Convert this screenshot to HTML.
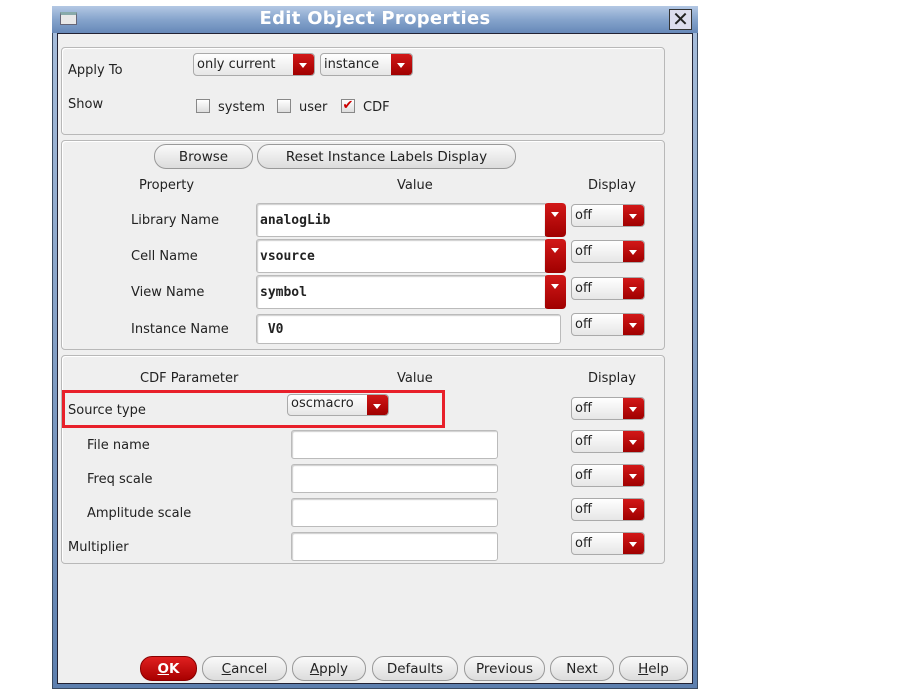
<!DOCTYPE html>
<html><head><style>
*{box-sizing:border-box;margin:0;padding:0}
body{width:900px;height:696px;background:#fff;position:relative;overflow:hidden;font-family:"DejaVu Sans","Liberation Sans",sans-serif;font-size:13px;color:#222}
.a{position:absolute}
.l{margin-top:2px}
.win{left:52px;top:6px;width:646px;height:683px;background:linear-gradient(#a9bfdc,#5d7fae);border:1px solid #3a4a60}
.body{left:57px;top:33px;width:636px;height:651px;background:#efefef;border:1px solid #223}
.title{left:52px;top:6px;width:646px;height:27px;background:linear-gradient(#b4c8e4,#86a4cc 50%,#6688b8);}
.tt{left:52px;top:8px;width:646px;text-align:center;color:#fff;font-weight:bold;font-size:18px;letter-spacing:0.3px}
.panel{border:1px solid #b8b8b8;border-radius:4px;box-shadow:inset 1px 1px 0 #fff}
.cb{height:23px;border:1px solid #aaa;border-radius:4px;background:linear-gradient(#fff,#e6e6e6);font-size:13px;padding:3px 0 0 3px;overflow:hidden}
.cb .ar{position:absolute;right:0;top:0;bottom:0;width:21px;background:linear-gradient(#d21818,#a00000);border-radius:0 3px 3px 0}
.ar:after{content:"";position:absolute;left:6px;top:9px;border-left:4px solid transparent;border-right:4px solid transparent;border-top:5px solid #fff}
.tf{background:#fff;border:1px solid #bbb;border-radius:3px;box-shadow:inset 1px 1px 1px #ccc;font-family:"DejaVu Sans Mono","Liberation Mono",monospace;font-weight:bold;font-size:13px;padding:9px 0 0 3px}
.btn{height:25px;border:1px solid #999;border-radius:12px;background:linear-gradient(#fafafa,#dcdcdc);text-align:center;font-size:13.5px;padding-top:4px}
.chk{width:14px;height:14px;border:1px solid #888;background:linear-gradient(#fff,#ddd)}
</style></head><body>
<div class="a win"></div>
<div class="a title"></div>
<div class="a" style="left:60px;top:12px;width:17px;height:13px;border:1px solid #667;background:#e8e8e8;border-top:3px solid #8aa"></div>
<div class="a tt">Edit Object Properties</div>
<div class="a" style="left:669px;top:9px;width:23px;height:21px;border:1px solid #333;background:#dde;font-size:20px;line-height:18px;text-align:center">✕</div>
<div class="a body"></div>

<div class="a panel" style="left:61px;top:47px;width:604px;height:88px"></div>
<div class="a l" style="left:68px;top:61px">Apply To</div>
<div class="a cb" style="left:193px;top:53px;width:122px">only current<div class="ar"></div></div>
<div class="a cb" style="left:320px;top:53px;width:93px">instance<div class="ar"></div></div>
<div class="a l" style="left:68px;top:95px">Show</div>
<div class="a chk" style="left:196px;top:99px"></div><div class="a l" style="left:218px;top:98px">system</div>
<div class="a chk" style="left:277px;top:99px"></div><div class="a l" style="left:299px;top:98px">user</div>
<div class="a chk" style="left:341px;top:99px;color:#c00;font-size:13px;line-height:12px;text-align:center;font-weight:bold">✔</div><div class="a l" style="left:363px;top:98px">CDF</div>

<div class="a panel" style="left:61px;top:140px;width:604px;height:210px"></div>
<div class="a btn" style="left:154px;top:144px;width:99px">Browse</div>
<div class="a btn" style="left:257px;top:144px;width:259px">Reset Instance Labels Display</div>
<div class="a l" style="left:139px;top:176px">Property</div>
<div class="a l" style="left:397px;top:176px">Value</div>
<div class="a l" style="left:588px;top:176px">Display</div>

<div class="a l" style="left:131px;top:211px">Library Name</div>
<div class="a tf" style="left:256px;top:203px;width:310px;height:34px">analogLib</div><div class="a cb" style="left:544px;top:203px;width:22px;height:34px;border:none;padding:0"><div class="ar"></div></div>
<div class="a l" style="left:131px;top:247px">Cell Name</div>
<div class="a tf" style="left:256px;top:239px;width:310px;height:34px">vsource</div><div class="a cb" style="left:544px;top:239px;width:22px;height:34px;border:none;padding:0"><div class="ar"></div></div>
<div class="a l" style="left:131px;top:283px">View Name</div>
<div class="a tf" style="left:256px;top:275px;width:310px;height:34px">symbol</div><div class="a cb" style="left:544px;top:275px;width:22px;height:34px;border:none;padding:0"><div class="ar"></div></div>
<div class="a l" style="left:131px;top:320px">Instance Name</div>
<div class="a tf" style="left:256px;top:314px;width:305px;height:30px;padding-top:7px">&nbsp;V0</div>
<div class="a cb" style="left:571px;top:204px;width:74px">off<div class="ar"></div></div>
<div class="a cb" style="left:571px;top:240px;width:74px">off<div class="ar"></div></div>
<div class="a cb" style="left:571px;top:277px;width:74px">off<div class="ar"></div></div>
<div class="a cb" style="left:571px;top:313px;width:74px">off<div class="ar"></div></div>

<div class="a panel" style="left:61px;top:355px;width:604px;height:209px"></div>
<div class="a l" style="left:140px;top:369px">CDF Parameter</div>
<div class="a l" style="left:397px;top:369px">Value</div>
<div class="a l" style="left:588px;top:369px">Display</div>
<div class="a" style="left:62px;top:390px;width:383px;height:38px;border:3px solid #e8202a"></div>
<div class="a l" style="left:68px;top:401px">Source type</div>
<div class="a cb" style="left:287px;top:394px;width:102px;height:22px;padding-top:1px">oscmacro<div class="ar"></div></div>
<div class="a l" style="left:87px;top:436px">File name</div>
<div class="a l" style="left:87px;top:470px">Freq scale</div>
<div class="a l" style="left:87px;top:504px">Amplitude scale</div>
<div class="a l" style="left:68px;top:538px">Multiplier</div>
<div class="a tf" style="left:291px;top:430px;width:207px;height:29px"></div>
<div class="a tf" style="left:291px;top:464px;width:207px;height:29px"></div>
<div class="a tf" style="left:291px;top:498px;width:207px;height:29px"></div>
<div class="a tf" style="left:291px;top:532px;width:207px;height:29px"></div>
<div class="a cb" style="left:571px;top:397px;width:74px">off<div class="ar"></div></div>
<div class="a cb" style="left:571px;top:430px;width:74px">off<div class="ar"></div></div>
<div class="a cb" style="left:571px;top:464px;width:74px">off<div class="ar"></div></div>
<div class="a cb" style="left:571px;top:498px;width:74px">off<div class="ar"></div></div>
<div class="a cb" style="left:571px;top:532px;width:74px">off<div class="ar"></div></div>

<div class="a btn" style="left:140px;top:656px;width:57px;background:linear-gradient(#e02020,#a80000);color:#fff;font-weight:bold;border-color:#800"><u>O</u>K</div>
<div class="a btn" style="left:202px;top:656px;width:85px"><u>C</u>ancel</div>
<div class="a btn" style="left:292px;top:656px;width:74px"><u>A</u>pply</div>
<div class="a btn" style="left:372px;top:656px;width:86px">Defaults</div>
<div class="a btn" style="left:464px;top:656px;width:81px">Previous</div>
<div class="a btn" style="left:550px;top:656px;width:64px">Next</div>
<div class="a btn" style="left:619px;top:656px;width:69px"><u>H</u>elp</div>
</body></html>
